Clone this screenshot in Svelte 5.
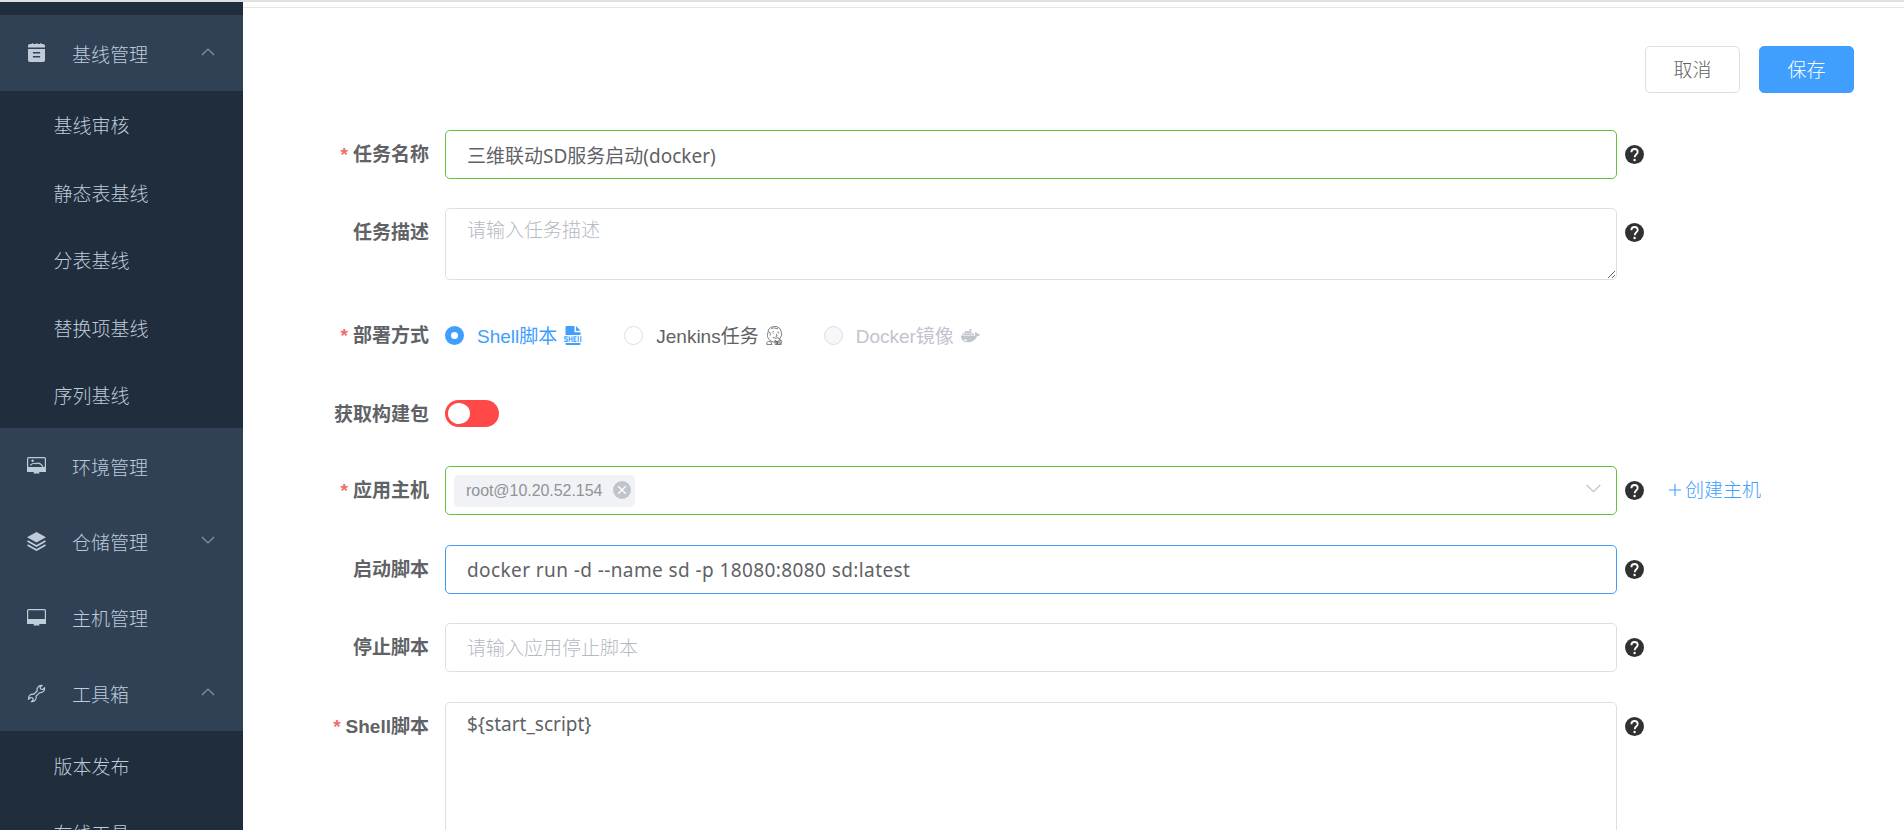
<script>
  const menu = [
    { title: '基线管理', icon: 'note', open: true, children: ['基线审核', '静态表基线', '分表基线', '替换项基线', '序列基线'] },
    { title: '环境管理', icon: 'picture' },
    { title: '仓储管理', icon: 'layers', open: false },
    { title: '主机管理', icon: 'monitor' },
    { title: '工具箱', icon: 'wrench', open: true, children: ['版本发布', '在线工具'] }
  ];
  let name = $state('三维联动SD服务启动(docker)');
  let description = $state('');
  let startScript = $state('docker run -d --name sd -p 18080:8080 sd:latest');
  let stopScript = $state('');
  let shellScript = $state('$' + '{start_script}');
</script>

{#snippet help()}
  <svg class="help" viewBox="0 0 19 19">
    <circle cx="9.5" cy="9.5" r="9.5" fill="#303133" />
    <path d="M6.4 7.2C6.4 5 7.7 4 9.6 4S12.7 5.1 12.7 6.9C12.7 9.2 9.7 9.3 9.7 12.2" fill="none" stroke="#fff" stroke-width="1.8" />
    <circle cx="9.6" cy="15" r="1.2" fill="#fff" />
  </svg>
{/snippet}

{#snippet menuIcon(kind)}
  <svg class="menu-icon" viewBox="0 0 19 19">
    {#if kind === 'note'}
      <path fill="currentColor" d="M1 4.6V2.8Q1 1 2.8 1H4.8V.2h1.4V1h3V.2h1.4V1h2.4V.2h1.4V1h1.4Q18 1 18 2.8V4.6z" />
      <path fill="currentColor" fill-rule="evenodd" d="M1 6H18V17.2Q18 19 16.2 19H2.8Q1 19 1 17.2zM5.9 9v1.6h7.2V9zM5.9 13v1.6h7.2V13z" />
    {:else if kind === 'layers'}
      <path fill="currentColor" d="M9.5 0 19 5.3 9.5 10.6 0 5.3z" />
      <path fill="none" stroke="currentColor" stroke-width="1.7" d="M.5 9 9.5 14.1 18.5 9M.5 13 9.5 18.1 18.5 13" />
    {:else if kind === 'wrench'}
      <path fill="none" stroke="currentColor" stroke-width="1.2" stroke-linejoin="round" d="M15.2 1.5a4.3 4.3 0 0 0-5 5.5L6.7 10.3a4.3 4.3 0 0 0-5.2 5l2-1.8 2.2.5.5 2-1.8 1.7a4.3 4.3 0 0 0 4.7-5.5l3.6-3.6a4.3 4.3 0 0 0 4.9-5l-2 1.9-2-.5-.6-2.1z" />
    {:else}
      <path fill="none" stroke="currentColor" stroke-width="1.2" d="M1.6 1.6H17.4Q18.4 1.6 18.4 2.6V15.4H.6V2.6Q.6 1.6 1.6 1.6z" />
      <path fill="currentColor" d="M.4 11H18.6V15.8H12L12.6 17.6H6.4L7 15.8H.4z" />
      {#if kind === 'picture'}
        <circle cx="5.6" cy="4.8" r="1.2" fill="currentColor" />
        <path fill="none" stroke="currentColor" stroke-width="1.2" d="M3.2 9.4Q6.2 6.4 9 7.6Q12.8 5.7 16 10.8" />
      {/if}
    {/if}
  </svg>
{/snippet}

<div class="app">
  <aside>
    {#each menu as item}
      <div class="menu-title">
        {@render menuIcon(item.icon)}
        <span>{item.title}</span>
        {#if item.open !== undefined}
          <svg class="chevron" viewBox="0 0 14 8"><path d={item.open ? 'M1 7 7 1l6 6' : 'm1 1 6 6 6-6'} /></svg>
        {/if}
      </div>
      {#each item.children ?? [] as child}
        <div class="menu-child">{child}</div>
      {/each}
    {/each}
  </aside>

  <main>
    <div class="actions">
      <button>取消</button>
      <button class="primary">保存</button>
    </div>
    <form autocomplete="off">
      <div class="row name">
        <div class="label required">任务名称</div>
        <input class="control valid" bind:value={name} />
        {@render help()}
      </div>
      <div class="row description">
        <div class="label">任务描述</div>
        <textarea class="control" placeholder="请输入任务描述" bind:value={description}></textarea>
        {@render help()}
      </div>
      <div class="row">
        <div class="label required">部署方式</div>
        <div class="radios">
          <div class="radio checked">
            <i></i><span>Shell脚本</span>
            <svg class="shell-icon" viewBox="0 0 18 19">
              <path fill="currentColor" d="M1.5 9V1.2Q1.5 0 2.7 0H10.5V5.5Q10.5 6.2 11.2 6.2H16.5V9zM12 0 16.5 4.8H12zM1.5 17H16.5V18Q16.5 19 15.5 19H2.5Q1.5 19 1.5 18z" />
              <path fill="none" stroke="currentColor" stroke-width="1.1" d="M3.8 10.9H.9V13H3.2V15.4H.2M5.2 10.3V16M8 10.3V16M5.2 13H8M12.5 10.9H10V15.4H12.5M10 13H12M14.2 10.3V16M16.8 10.3V16" />
            </svg>
          </div>
          <div class="radio jenkins">
            <i></i><span>Jenkins任务</span>
            <svg class="jenkins-icon" viewBox="0 0 17 19">
              <g fill="none" stroke="currentColor" stroke-width=".8" stroke-linejoin="round">
                <path d="M4 14.5C2.4 13 1.2 10.8 1.5 9.4Q.8 7.8 2 7Q1.6 3.3 4.3 1.7Q7.5-.4 11 .7Q15.2 2 15.4 6.1Q16.2 9.8 14 12.3L12.7 14.6" />
                <path d="M3 5.7 4.2 7V9.5M5 3 7.3 1.8 12 2.8M6.4 6.1 8 5.6M11.4 6.1l1.8.1M7.2 7.4v.7M12.3 7.4v.7M10.2 8l1 2-1.5.5M7 11.3q3 2 5.3.1M4 14.5 7 16l5-.3M.8 18.5V16.6Q2.5 14.8 4.5 15.4L6 18.5zM9 14.2l2.2 1.5v2.8h-2zM11.2 15.7l4-1.5v4.3h-4zM12.2 12.2l2.4 1.2" />
              </g>
              <path d="M10 15.5h5.2v2.8H10z" fill="currentColor" opacity=".5" />
            </svg>
          </div>
          <div class="radio disabled">
            <i></i><span>Docker镜像</span>
            <svg class="docker-icon" viewBox="0 0 640 512">
              <path fill="currentColor" d="M349.9 236.3h-66.1v-59.4h66.1v59.4zm0-204.3h-66.1v60.7h66.1V32zm78.2 144.8H362v59.4h66.1v-59.4zm-156.3-72.1h-66.1v60.1h66.1v-60.1zm78.1 0h-66.1v60.1h66.1v-60.1zm276.8 100c-14.4-9.7-47.6-13.2-73.1-8.4-3.3-24-16.7-44.9-41.1-63.7l-14-9.3-9.3 14c-18.4 27.8-23.4 73.6-3.7 103.8-8.7 4.7-25.8 11.1-48.4 10.7H2.4c-8.7 50.8 5.8 116.8 44 162.1 37.1 43.9 92.7 66.2 165.4 66.2 157.4 0 273.9-72.5 328.4-204.2 21.4.4 67.6.1 91.3-45.2 1.5-2.5 6.6-13.2 8.5-17.1l-13.3-8.9zm-511.1-27.9h-66v59.4h66.1v-59.4zm78.1 0h-66.1v59.4h66.1v-59.4zm78.1 0h-66.1v59.4h66.1v-59.4zm-78.1-72.1h-66.1v60.1h66.1v-60.1z" />
              <path fill="#fff" d="M75 392q55 8 95-12 10 40 50 55-95 12-145-43z" />
            </svg>
          </div>
        </div>
      </div>
      <div class="row fetch">
        <div class="label">获取构建包</div>
        <div class="switch"></div>
      </div>
      <div class="row host">
        <div class="label required">应用主机</div>
        <div class="control select valid">
          <div class="tag">
            <span>root@10.20.52.154</span>
            <svg viewBox="0 0 18 18"><circle cx="9" cy="9" r="9" fill="#c0c4cc" /><path d="m5.2 5.2 7.6 7.6m0-7.6-7.6 7.6" stroke="#fff" stroke-width="1.3" /></svg>
          </div>
          <svg class="arrow" viewBox="0 0 15 9"><path d="m.7 1 6.8 6.6L14.3 1" /></svg>
        </div>
        {@render help()}
        <a class="create" href="#create"><svg viewBox="0 0 12 12"><path d="M6 0v12M0 6h12" /></svg><span>创建主机</span></a>
      </div>
      <div class="row">
        <div class="label">启动脚本</div>
        <input class="control focused" bind:value={startScript} />
        {@render help()}
      </div>
      <div class="row stop">
        <div class="label">停止脚本</div>
        <input class="control" placeholder="请输入应用停止脚本" bind:value={stopScript} />
        {@render help()}
      </div>
      <div class="row shell">
        <div class="label required">Shell脚本</div>
        <textarea class="control" bind:value={shellScript}></textarea>
        {@render help()}
      </div>
    </form>
  </main>
</div>

<style>
  :global(body) { overflow: hidden; background: #fff; }
  * { box-sizing: border-box; }
  .app {
    display: flex;
    width: 1904px;
    height: 830px;
    overflow: hidden;
    border-top: 2px solid #e0e0e0;
    color: #606266;
    font: 19px/1 "Liberation Sans", "Noto Sans CJK SC", sans-serif;
  }
  svg { display: block; flex: none; }
  aside {
    flex: none;
    width: 243px;
    padding-top: 13px;
    overflow: hidden;
    background: #1f2d3d;
    color: #bfcbd9;
    font-weight: 300;
  }
  .menu-title {
    display: flex;
    align-items: center;
    height: 75.8px;
    padding: 0 28px 0 27px;
    background: #304156;
  }
  .menu-title span { margin-left: 26px; padding-top: 5px; }
  .menu-icon { width: 19px; height: 19px; }
  .chevron {
    width: 14px;
    height: 8px;
    margin: 0 0 2px auto;
    fill: none;
    stroke: #909399;
    stroke-width: 1.2;
  }
  .menu-child {
    display: flex;
    align-items: center;
    height: 67.4px;
    padding: 5px 0 0 53.5px;
  }
  main {
    flex: 1;
    margin-top: 5px;
    border-top: 1px solid #e6e6e6;
    padding: 38px 50px 0 0;
  }
  .actions { display: flex; justify-content: flex-end; gap: 19px; }
  button {
    width: 95px;
    height: 47px;
    padding: 1px 0 0;
    border: 1px solid #dcdfe6;
    border-radius: 5px;
    background: #fff;
    color: #606266;
    font: inherit;
    font-weight: 300;
  }
  .primary { border-color: #409eff; background: #409eff; color: #fff; }
  form { margin-top: 37px; }
  .row { display: flex; align-items: flex-start; height: 78.5px; }
  .row.name { height: 78px; }
  .row.description { height: 103px; }
  .row.fetch { height: 76px; }
  .row.host { height: 79px; }
  .row.stop { height: 79px; }
  .row.shell { height: 240px; }
  .label {
    width: 202px;
    padding-right: 16px;
    line-height: 50px;
    text-align: right;
    font-weight: 700;
    white-space: nowrap;
  }
  .required::before {
    content: '*';
    margin-right: 5px;
    color: #f56c6c;
  }
  .control {
    display: block;
    width: 1172px;
    height: 49px;
    margin: 0;
    padding: 0 21px;
    border: 1px solid #dcdfe6;
    border-radius: 5px;
    outline: none;
    background: #fff;
    color: #606266;
    font: 19px "Noto Sans", "Noto Sans CJK SC", sans-serif;
  }
  .control::placeholder { color: #b4b9c2; opacity: 1; font-weight: 300; }
  .valid { border-color: #67c23a; }
  .focused { border-color: #409eff; padding-top: 1px; letter-spacing: .405px; }
  textarea.control { height: 72px; padding: 7px 21px; line-height: 29px; resize: vertical; overflow: hidden; }
  .shell textarea.control { height: 240px; }
  .help { width: 19px; height: 19px; margin: 15px 0 0 8px; }
  .radios { display: flex; height: 49px; align-items: center; }
  .radio { display: flex; align-items: center; }
  .radio span { padding-top: 1px; }
  .radio i {
    width: 19px;
    height: 19px;
    margin-right: 13px;
    border: 1px solid #dcdfe6;
    border-radius: 50%;
    background: #fff;
  }
  .checked { color: #409eff; }
  .checked i { border: 6.5px solid #409eff; }
  .jenkins { margin-left: 42px; }
  .disabled { margin-left: 41px; color: #c0c4cc; }
  .disabled i { background: #f5f7fa; }
  .shell-icon { width: 18px; height: 19px; margin-left: 7px; }
  .jenkins-icon { width: 17px; height: 19px; margin-left: 7px; }
  .docker-icon { width: 19px; height: 15.2px; margin-left: 7px; }
  .switch {
    width: 54px;
    height: 27px;
    margin-top: 10px;
    padding: 3px;
    border-radius: 14px;
    background: #ff4949;
  }
  .switch::before {
    content: '';
    display: block;
    width: 22px;
    height: 21px;
    border-radius: 50%;
    background: #fff;
  }
  .select { display: flex; align-items: center; justify-content: space-between; padding: 1px 15px 0 8px; }
  .tag {
    display: flex;
    align-items: center;
    justify-content: space-between;
    width: 181px;
    height: 32px;
    padding: 0 4px 0 12px;
    border-radius: 5px;
    background: #f0f2f5;
    color: #909399;
    font: 16px "Liberation Sans", sans-serif;
    letter-spacing: -.05px;
  }
  .tag svg { width: 18px; height: 18px; margin-top: -2px; }
  .arrow { width: 15px; height: 9px; margin-top: -4px; fill: none; stroke: #c0c4cc; stroke-width: 1.3; }
  .create { display: flex; align-items: center; height: 49px; margin-left: 25px; color: #409eff; text-decoration: none; font-weight: 300; }
  .create svg { width: 12px; height: 12px; margin-right: 4px; stroke: currentColor; stroke-width: 1.1; }
</style>
